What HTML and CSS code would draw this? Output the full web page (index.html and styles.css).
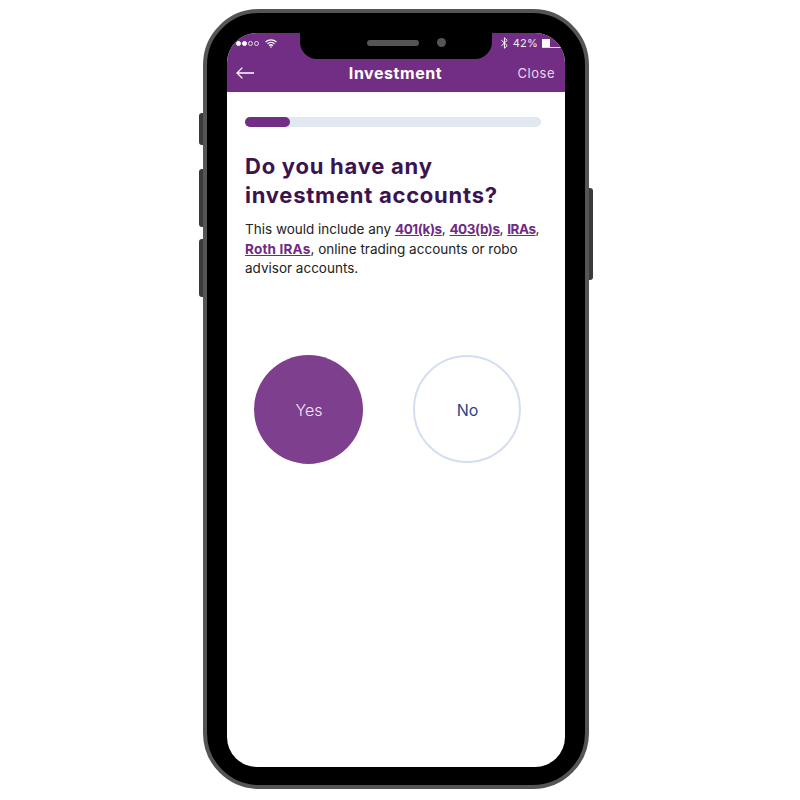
FILE: index.html
```html
<!DOCTYPE html>
<html lang="en">
<head>
  <meta charset="UTF-8">
  <meta name="viewport" content="width=device-width, initial-scale=1.0">
  <title>Investment</title>
  <link rel="stylesheet" href="styles.css">
</head>
<body>
  <div class="phone">
    <span class="side-btn side-mute"></span>
    <span class="side-btn side-vol-up"></span>
    <span class="side-btn side-vol-down"></span>
    <span class="side-btn side-power"></span>

    <div class="notch">
      <span class="speaker"></span>
      <span class="camera"></span>
    </div>

    <div class="screen">
      <div class="top-bar">
        <div class="status-row">
          <div class="status-left">
            <span class="signal">
              <i class="dot on"></i><i class="dot on"></i><i class="dot"></i><i class="dot"></i>
            </span>
            <svg class="wifi" width="12" height="9" viewBox="0 0 12 9" fill="none" stroke="#fff" stroke-width="1.2">
              <path d="M0.6 3A7.8 7.8 0 0 1 11.4 3"/>
              <path d="M2.4 4.9A5.2 5.2 0 0 1 9.6 4.9"/>
              <path d="M4.1 6.7A2.7 2.7 0 0 1 7.9 6.7"/>
              <circle cx="6" cy="8" r="0.8" fill="#fff" stroke="none"/>
            </svg>
          </div>
          <div class="status-right">
            <svg class="bluetooth" width="9" height="12" viewBox="0 0 7 11" fill="none" stroke="#fff" stroke-width="0.9">
              <path d="M0.6 2.9L6 7.9L3.4 10.3V0.7L6 3.1L0.6 8.1"/>
            </svg>
            <span class="battery-pct">42%</span>
            <span class="battery"><span class="battery-level"></span></span>
          </div>
        </div>
        <div class="nav-row">
          <svg class="back" width="18" height="12" viewBox="0 0 18 12" fill="none" stroke="#fff" stroke-width="1.3">
            <path d="M18 6H1"/>
            <path d="M6.4 0.6L1 6L6.4 11.4"/>
          </svg>
          <span class="nav-title">Investment</span>
          <span class="nav-close">Close</span>
        </div>
      </div>

      <div class="content">
        <div class="progress"><div class="progress-fill"></div></div>
        <h1>Do you have any investment accounts?</h1>
        <p>This would include any <a href="#">401(k)s</a>, <a href="#">403(b)s</a>, <a href="#">IRAs</a>, <a class="link-roth" href="#">Roth IRAs</a>, online trading accounts or robo advisor accounts.</p>
        <div class="choices">
          <button class="choice choice-yes">Yes</button>
          <button class="choice choice-no">No</button>
        </div>
      </div>
    </div>
  </div>
</body>
</html>
```

FILE: styles.css
```css
* {
  box-sizing: border-box;
}
body {
  margin: 0;
  padding: 9px 0 0 203px;
  background: white;
  font-family: 'Inter', sans-serif;
}
.phone {
  position: relative;
  width: 386px;
  height: 780px;
  padding: 20px 20px 18px;
  background: black;
  border: 4px solid #555;
  border-radius: 56px;
}
.side-btn {
  position: absolute;
  width: 4px;
  background: #3a3a3a;
}
.side-mute, .side-vol-up, .side-vol-down {
  left: -8px;
  border-radius: 3px 0 0 3px;
}
.side-mute {
  top: 100px;
  height: 32px;
}
.side-vol-up {
  top: 156px;
  height: 58px;
}
.side-vol-down {
  top: 226px;
  height: 58px;
}
.side-power {
  right: -8px;
  top: 175px;
  height: 92px;
  border-radius: 0 3px 3px 0;
}
.notch {
  position: absolute;
  top: 20px;
  left: 93px;
  width: 192px;
  height: 26px;
  background: black;
  border-radius: 0 0 17px 17px;
  display: flex;
  align-items: center;
  padding: 0 0 7px 67px;
}
.speaker {
  width: 52px;
  height: 6px;
  background: #555;
  border-radius: 3px;
}
.camera {
  width: 9px;
  height: 9px;
  margin-left: 18px;
  background: #555;
  border-radius: 50%;
}
.screen {
  height: 100%;
  background: white;
  border-radius: 30px;
  overflow: hidden;
}
.top-bar {
  height: 59px;
  background: #722d84;
  color: white;
}
.status-row {
  height: 20px;
  padding: 0 0 0 9px;
  display: flex;
  justify-content: space-between;
  align-items: center;
}
.status-left, .status-right {
  display: flex;
  align-items: center;
}
.signal {
  display: flex;
  gap: 1px;
}
.dot {
  width: 5px;
  height: 5px;
  border: 0.7px solid #ddd;
  border-radius: 50%;
}
.dot.on {
  background: white;
  border-color: white;
}
.wifi {
  margin-left: 6px;
}
.bluetooth {
  margin-right: 4px;
}
.battery-pct {
  font-size: 11px;
  letter-spacing: 0.2px;
  color: #eee;
  margin-right: 4px;
}
.battery {
  display: block;
  width: 23px;
  height: 9px;
  border-bottom: 1px solid #ddd;
}
.battery-level {
  display: block;
  width: 8px;
  height: 8px;
  background: white;
}
.nav-row {
  height: 39px;
  padding: 0 10px 0 9px;
  display: grid;
  grid-template-columns: 1fr auto 1fr;
  align-items: center;
}
.nav-title {
  font-size: 16px;
  font-weight: 700;
  letter-spacing: 0.55px;
}
.nav-close {
  justify-self: end;
  font-size: 13px;
  letter-spacing: 0.5px;
  color: #e4d8e8;
}
.content {
  padding: 25px 24px 0 18px;
}
.progress {
  height: 10px;
  background: #e2e8f0;
  border-radius: 5px;
}
.progress-fill {
  width: 45px;
  height: 100%;
  background: #722d84;
  border-radius: 5px;
}
h1 {
  margin: 25px 0 0;
  font-size: 22px;
  line-height: 29px;
  font-weight: 700;
  letter-spacing: 0.75px;
  color: #3a1450;
}
p {
  margin: 10px 0 0;
  font-size: 13.5px;
  line-height: 19.5px;
  color: #222;
}
a {
  color: #6f2a85;
  font-weight: 700;
  letter-spacing: -0.45px;
  text-decoration: underline;
}
.link-roth {
  letter-spacing: 0.2px;
}
.choices {
  display: flex;
  align-items: flex-start;
  gap: 50px;
  margin-top: 76px;
  padding-left: 9px;
}
.choice {
  padding: 2px 0 0 1px;
  border-radius: 50%;
  font-family: inherit;
  font-size: 16px;
  font-weight: 300;
  cursor: pointer;
}
.choice-yes {
  width: 109px;
  height: 109px;
  background: #7f3f8f;
  border: none;
  color: #f1e8f3;
}
.choice-no {
  width: 108px;
  height: 108px;
  background: white;
  border: 2px solid #d5def0;
  color: #2b4585;
  font-weight: 400;
}
```
